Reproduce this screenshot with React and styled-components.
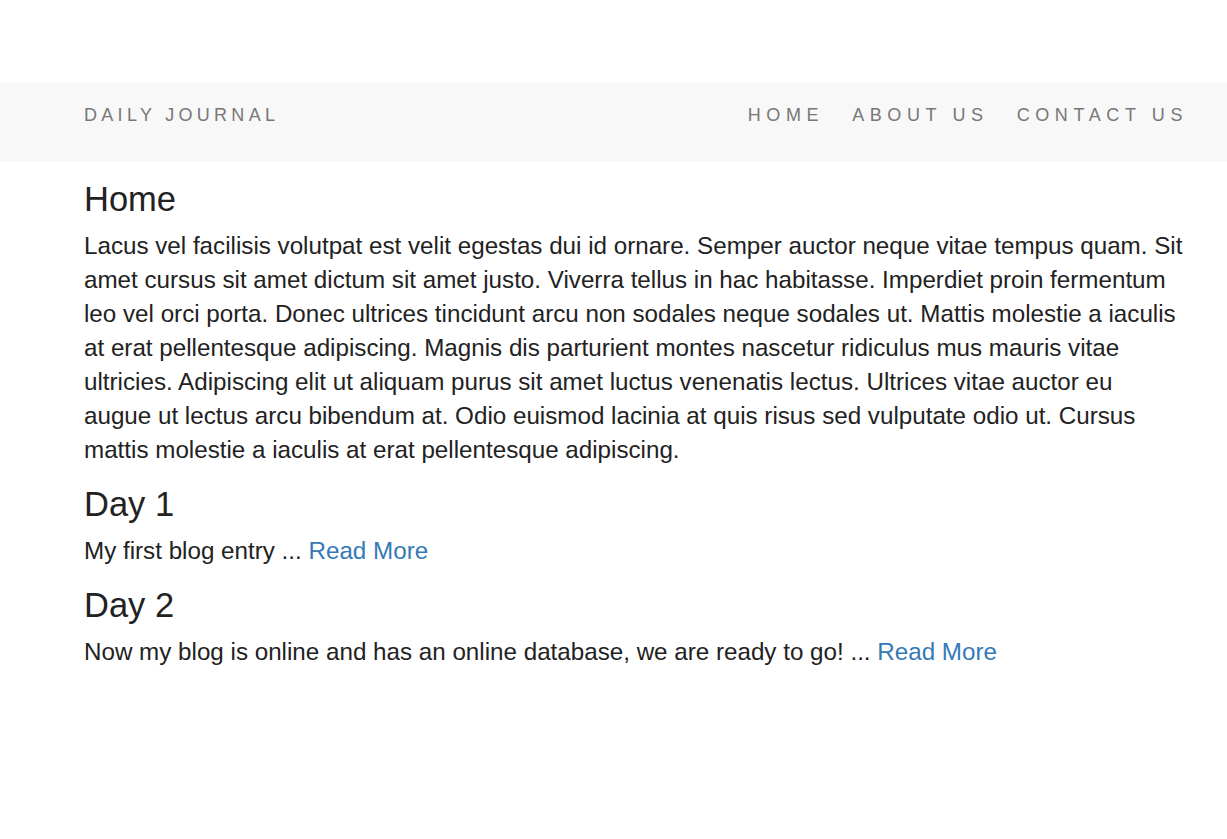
import React from 'react';
import styled, { createGlobalStyle } from 'styled-components';

const GlobalStyle = createGlobalStyle`
    body {
        margin: 0;
        background: #fff;
        font-family: "Liberation Sans", Arial, sans-serif;
        color: #333;
    }
`

const navItems = [
    {key: "home", href: "/", text: "Home"},
    {key: "about", href: "/about", text: "About Us"},
    {key: "contact", href: "/contact", text: "Contact Us"}
]

const posts = [
    {key: "day1", title: "Day 1", excerpt: "My first blog entry", href: "/posts/day-1"},
    {key: "day2", title: "Day 2", excerpt: "Now my blog is online and has an online database, we are ready to go!", href: "/posts/day-2"}
]

const homeText = "Lacus vel facilisis volutpat est velit egestas dui id ornare. Semper auctor neque vitae tempus quam. Sit amet cursus sit amet dictum sit amet justo. Viverra tellus in hac habitasse. Imperdiet proin fermentum leo vel orci porta. Donec ultrices tincidunt arcu non sodales neque sodales ut. Mattis molestie a iaculis at erat pellentesque adipiscing. Magnis dis parturient montes nascetur ridiculus mus mauris vitae ultricies. Adipiscing elit ut aliquam purus sit amet luctus venenatis lectus. Ultrices vitae auctor eu augue ut lectus arcu bibendum at. Odio euismod lacinia at quis risus sed vulputate odio ut. Cursus mattis molestie a iaculis at erat pellentesque adipiscing."

const Page = styled.div`
    padding-top: 83px;
`

const Navbar = styled.nav`
    display: flex;
    justify-content: space-between;
    align-items: flex-start;
    height: 79px;
    background: #f8f8f8;
    padding: 0 25px 0 84px;
    box-sizing: border-box;
`

const Brand = styled.a`
    padding-top: 22px;
    font-size: 18px;
    line-height: 20px;
    letter-spacing: 4.3px;
    text-transform: uppercase;
    text-decoration: none;
    color: #777;
`

const NavList = styled.ul`
    display: flex;
    margin: 0;
    padding: 0;
    list-style: none;
`

const NavLink = styled.a`
    display: block;
    padding: 22px 14px 0;
    font-size: 18px;
    line-height: 20px;
    letter-spacing: 5.6px;
    text-transform: uppercase;
    text-decoration: none;
    color: #777;
`

const Main = styled.main`
    padding: 0 41px 0 84px;
`

const Heading = styled.h2`
    margin: 19px 0 10px;
    font-size: 34.5px;
    font-weight: 400;
    line-height: 1.1;
    color: #222;
`

const Text = styled.p`
    margin: 0;
    font-size: 24.2px;
    line-height: 34px;
    color: #222;
`

const ReadMore = styled.a`
    color: #337ab7;
    text-decoration: none;
`

function Post({ post }) {
    return (
        <section>
            <Heading>{post.title}</Heading>
            <Text>
                {post.excerpt} ... <ReadMore href={post.href}>Read More</ReadMore>
            </Text>
        </section>
    );
}

export default function App() {
    return (
        <Page>
            <GlobalStyle />
            <Navbar>
                <Brand href="/">Daily Journal</Brand>
                <NavList>
                    {navItems.map(item => (
                        <li key={item.key}>
                            <NavLink href={item.href}>{item.text}</NavLink>
                        </li>
                    ))}
                </NavList>
            </Navbar>
            <Main>
                <Heading>Home</Heading>
                <Text>{homeText}</Text>
                {posts.map(post => <Post key={post.key} post={post} />)}
            </Main>
        </Page>
    );
}
